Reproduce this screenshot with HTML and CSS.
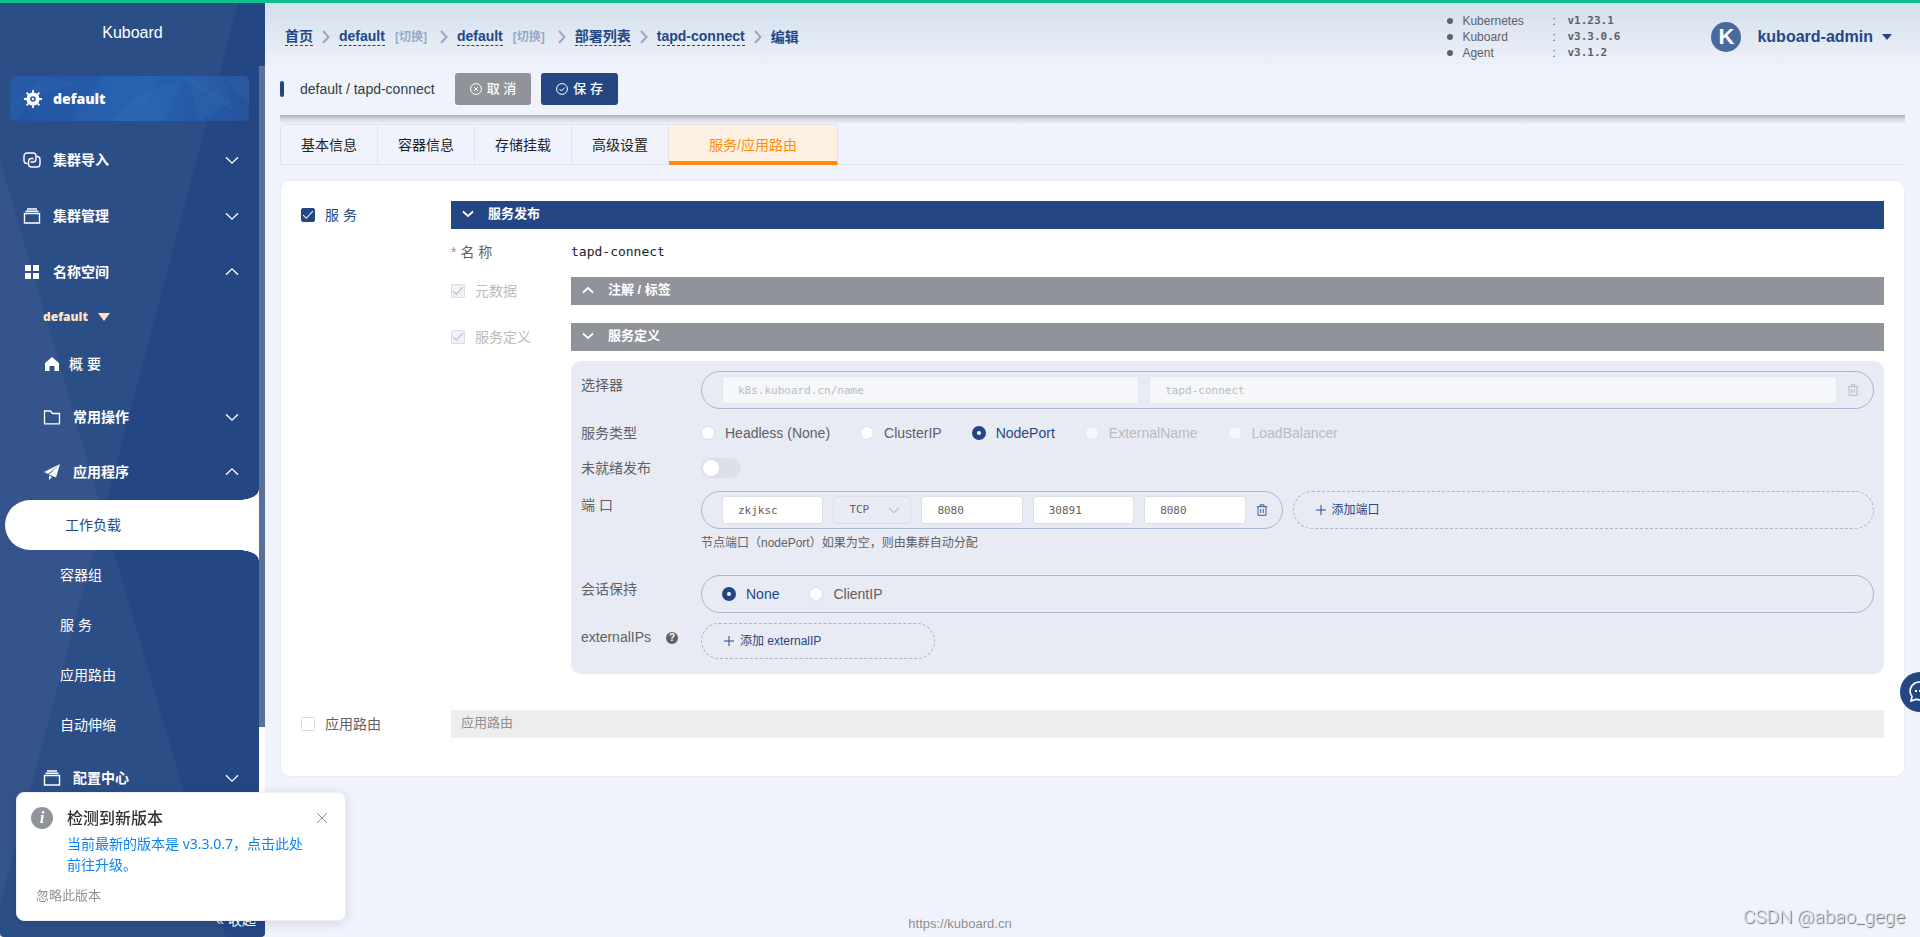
FILE: index.html
```html
<!DOCTYPE html>
<html lang="zh-CN">
<head>
<meta charset="utf-8">
<title>Kuboard</title>
<link rel="stylesheet" href="styles.css">
</head>
<body>
<svg class="defs" width="0" height="0" aria-hidden="true">
  <symbol id="i-down" viewBox="0 0 14 14"><path d="M1 4.200L7 10.200L13 4.200" fill="none" stroke="currentColor" stroke-width="1.300"/></symbol>
  <symbol id="i-up" viewBox="0 0 14 14"><path d="M1 9.800L7 3.800L13 9.800" fill="none" stroke="currentColor" stroke-width="1.300"/></symbol>
  <symbol id="i-down-bold" viewBox="0 0 12 12"><path d="M1 3.500L6 8L11 3.500" fill="none" stroke="currentColor" stroke-width="1.800"/></symbol>
  <symbol id="i-up-bold" viewBox="0 0 12 12"><path d="M1 8.500L6 4L11 8.500" fill="none" stroke="currentColor" stroke-width="1.800"/></symbol>
  <symbol id="i-box" viewBox="0 0 18 16"><path d="M1.500 5.500h15v9.500h-15z" fill="none" stroke="currentColor" stroke-width="1.400"/><path d="M2.500 3.200h13M4 1h10" fill="none" stroke="currentColor" stroke-width="1.500"/></symbol>
  <symbol id="i-trash" viewBox="0 0 12 12"><path d="M.800 2.700h10.400M4 2.500V.800h4v1.700M2 2.700v8.600h8V2.700M4.700 5v4M7.300 5v4" fill="none" stroke="currentColor" stroke-width="1"/></symbol>
  <symbol id="i-plus" viewBox="0 0 12 12"><path d="M6 1v10M1 6h10" fill="none" stroke="currentColor" stroke-width="1"/></symbol>
  <symbol id="i-sep" viewBox="0 0 8 14"><path d="M1 1l5.500 6L1 13" fill="none" stroke="currentColor" stroke-width="2"/></symbol>
</svg>
<div class="topline"></div>
<div class="app">
  <aside class="side">
    <svg class="side-art" viewBox="0 0 265 934" preserveAspectRatio="none" aria-hidden="true">
      <path d="M0 0H238L0 902Z" fill="#fff" fill-opacity=".04"/>
      <path d="M0 157L226 934H0Z" fill="#fff" fill-opacity=".04"/>
    </svg>
    <div class="brand">Kuboard</div>
    <nav class="nav">
      <button class="cluster" type="button">
        <svg class="cluster-art" viewBox="0 0 239 45" preserveAspectRatio="none" aria-hidden="true">
          <path d="M0 0H36L6 45H0ZM60 45L92 0L125 45ZM92 0H150L125 45ZM170 0H212L224 36ZM212 0H239V28Z" fill="#4f96d4" fill-opacity=".07"/>
          <path d="M36 0L66 8L0 30ZM125 22L176 0L154 45H100ZM176 0L222 26L190 45Z" fill="#4fa6d4" fill-opacity=".08"/>
        </svg>
        <svg class="ico18" viewBox="0 0 18 18" aria-hidden="true"><circle cx="9" cy="9" r="4.700" fill="none" stroke="#fff" stroke-width="3.800"/><circle cx="9" cy="9" r="1.200" fill="#fff"/><path d="M9 0v3M9 15v3M0 9h3M15 9h3M2.600 2.600l2 2M13.400 13.400l2 2M2.600 15.400l2-2M13.400 4.600l2-2" stroke="#fff" stroke-width="1.800"/></svg>
        <span>default</span>
      </button>
      <button class="item" type="button">
        <svg class="ico18" viewBox="0 0 18 16" aria-hidden="true"><g fill="none" stroke="currentColor" stroke-width="1.400"><path d="M4.500 11.500H4A3 3 0 0 1 1 8.500V4a3 3 0 0 1 3-3h6a3 3 0 0 1 3 3v3a3 3 0 0 1-3 3H7.500"/><path d="M13.500 4.500H14a3 3 0 0 1 3 3V12a3 3 0 0 1-3 3H8.500a3 3 0 0 1-3-3V9.500a3 3 0 0 1 3-3h2"/></g></svg>
        <span>集群导入</span><svg class="arrow"><use href="#i-down"/></svg>
      </button>
      <button class="item" type="button">
        <svg class="ico18"><use href="#i-box"/></svg>
        <span>集群管理</span><svg class="arrow"><use href="#i-down"/></svg>
      </button>
      <button class="item" type="button">
        <svg class="ico18" viewBox="0 0 18 18" aria-hidden="true"><path d="M2 2h6v6H2zM10 2h6v6h-6zM2 10h6v6H2zM10 10h6v6h-6z" fill="currentColor"/></svg>
        <span>名称空间</span><svg class="arrow"><use href="#i-up"/></svg>
      </button>
      <button class="ns" type="button"><span>default</span><svg class="caret" viewBox="0 0 12 8" aria-hidden="true"><path d="M0 0h12L6 8z" fill="currentColor"/></svg></button>
      <a class="home" href="#overview">
        <svg class="ico16" viewBox="0 0 16 16" aria-hidden="true"><path d="M8 1l7 6v8h-4.500v-5h-5v5H1V7z" fill="currentColor"/></svg>
        <span>概 要</span>
      </a>
      <button class="item sub" type="button">
        <svg class="ico18" viewBox="0 0 18 16" aria-hidden="true"><path d="M1.500 2h6l2 2.500h7v10.300h-15z" fill="none" stroke="currentColor" stroke-width="1.300"/></svg>
        <span>常用操作</span><svg class="arrow"><use href="#i-down"/></svg>
      </button>
      <button class="item sub" type="button">
        <svg class="ico18" viewBox="0 0 18 18" aria-hidden="true"><path d="M17 1L1 9l4 2zM17 1L6 11.500l7 3zM6 12.500l3 1.500-3 3z" fill="currentColor"/></svg>
        <span>应用程序</span><svg class="arrow"><use href="#i-up"/></svg>
      </button>
      <a class="leaf active" href="#workload">工作负载</a>
      <a class="leaf" href="#pods">容器组</a>
      <a class="leaf" href="#service">服 务</a>
      <a class="leaf" href="#ingress">应用路由</a>
      <a class="leaf" href="#hpa">自动伸缩</a>
      <button class="item sub" type="button">
        <svg class="ico18"><use href="#i-box"/></svg>
        <span>配置中心</span><svg class="arrow"><use href="#i-down"/></svg>
      </button>
    </nav>
    <div class="track"><div class="thumb"></div></div>
    <button class="fold" type="button">« 收起</button>
  </aside>

  <main class="main">
    <header class="head">
      <nav class="crumbs">
        <a href="#home">首页</a><svg class="sep"><use href="#i-sep"/></svg>
        <a href="#cluster">default</a><button class="switch-link" type="button">[切换]</button><svg class="sep far"><use href="#i-sep"/></svg>
        <a href="#namespace">default</a><button class="switch-link" type="button">[切换]</button><svg class="sep far"><use href="#i-sep"/></svg>
        <a href="#deployments">部署列表</a><svg class="sep"><use href="#i-sep"/></svg>
        <a href="#tapd-connect">tapd-connect</a><svg class="sep"><use href="#i-sep"/></svg>
        <span>编辑</span>
      </nav>
      <ul class="versions">
        <li><span class="vn">Kubernetes</span><span class="vc">:</span><span class="vv">v1.23.1</span></li>
        <li><span class="vn">Kuboard</span><span class="vc">:</span><span class="vv">v3.3.0.6</span></li>
        <li><span class="vn">Agent</span><span class="vc">:</span><span class="vv">v3.1.2</span></li>
      </ul>
      <button class="user" type="button">
        <span class="avatar">K</span><span>kuboard-admin</span>
        <svg class="user-caret" viewBox="0 0 10 6" aria-hidden="true"><path d="M0 0h10L5 6z" fill="currentColor"/></svg>
      </button>
    </header>

    <section class="actions">
      <h1>default / tapd-connect</h1>
      <button class="btn gray" type="button"><svg viewBox="0 0 12 12" aria-hidden="true"><g fill="none" stroke="currentColor"><circle cx="6" cy="6" r="5.400"/><path d="M4.200 4.200l3.600 3.600M7.800 4.200L4.200 7.800"/></g></svg>取 消</button>
      <button class="btn blue" type="button"><svg viewBox="0 0 12 12" aria-hidden="true"><g fill="none" stroke="currentColor"><circle cx="6" cy="6" r="5.400"/><path d="M3.500 6l2 2 3.200-3.500"/></g></svg>保 存</button>
    </section>
    <div class="shade"></div>

    <div class="tabs" role="tablist">
      <button role="tab" type="button">基本信息</button>
      <button role="tab" type="button">容器信息</button>
      <button role="tab" type="button">存储挂载</button>
      <button role="tab" type="button">高级设置</button>
      <button role="tab" type="button" class="on" aria-selected="true">服务/应用路由</button>
    </div>

    <form class="card">
      <div class="row-outer">
        <label class="check on"><input type="checkbox" checked><span>服 务</span></label>
        <div>
          <button class="bar bar-blue" type="button"><svg><use href="#i-down-bold"/></svg>服务发布</button>
          <div class="row-mid name-row">
            <span class="name-label"><i>*</i>名 称</span><span class="name-value">tapd-connect</span>
          </div>
          <div class="row-mid">
            <label class="check"><input type="checkbox" checked disabled><span>元数据</span></label>
            <button class="bar bar-gray" type="button"><svg><use href="#i-up-bold"/></svg>注解 / 标签</button>
          </div>
          <div class="row-mid def-row">
            <label class="check"><input type="checkbox" checked disabled><span>服务定义</span></label>
            <div>
              <button class="bar bar-gray" type="button"><svg><use href="#i-down-bold"/></svg>服务定义</button>
              <div class="panel">
                <div class="row-in">
                  <span class="lab">选择器</span>
                  <div class="pill selector">
                    <input class="field key" aria-label="选择器名称" value="k8s.kuboard.cn/name" disabled>
                    <input class="field val" aria-label="选择器值" value="tapd-connect" disabled>
                    <button class="del" type="button" aria-label="删除选择器" disabled><svg><use href="#i-trash"/></svg></button>
                  </div>
                </div>
                <div class="row-in type-row">
                  <span class="lab">服务类型</span>
                  <div class="radios">
                    <label class="radio"><input type="radio" name="type"><span>Headless (None)</span></label>
                    <label class="radio"><input type="radio" name="type"><span>ClusterIP</span></label>
                    <label class="radio"><input type="radio" name="type" checked><span>NodePort</span></label>
                    <label class="radio"><input type="radio" name="type" disabled><span>ExternalName</span></label>
                    <label class="radio"><input type="radio" name="type" disabled><span>LoadBalancer</span></label>
                  </div>
                </div>
                <div class="row-in ready-row">
                  <label class="lab" for="ready">未就绪发布</label>
                  <input class="toggle" id="ready" type="checkbox" role="switch">
                </div>
                <div class="row-in port-row">
                  <span class="lab">端 口</span>
                  <div>
                    <div class="ports">
                      <div class="pill">
                        <input class="field" aria-label="端口名称" value="zkjksc">
                        <span class="proto"><select aria-label="协议"><option>TCP</option></select><svg><use href="#i-down"/></svg></span>
                        <input class="field" aria-label="服务端口" value="8080">
                        <input class="field" aria-label="节点端口" value="30891">
                        <input class="field" aria-label="目标端口" value="8080">
                        <button class="del" type="button" aria-label="删除端口"><svg><use href="#i-trash"/></svg></button>
                      </div>
                      <button class="pill add" type="button"><svg><use href="#i-plus"/></svg>添加端口</button>
                    </div>
                    <p class="hint">节点端口（nodePort）如果为空，则由集群自动分配</p>
                  </div>
                </div>
                <div class="row-in session-row">
                  <span class="lab">会话保持</span>
                  <div class="pill radios">
                    <label class="radio"><input type="radio" name="aff" checked><span>None</span></label>
                    <label class="radio"><input type="radio" name="aff"><span>ClientIP</span></label>
                  </div>
                </div>
                <div class="row-in ext-row">
                  <span class="lab">externalIPs<span class="help">?</span></span>
                  <button class="pill add ext" type="button"><svg><use href="#i-plus"/></svg>添加 externalIP</button>
                </div>
              </div>
            </div>
          </div>
        </div>
      </div>
      <div class="row-outer ingress-row">
        <label class="check"><input type="checkbox"><span>应用路由</span></label>
        <div class="bar-off">应用路由</div>
      </div>
    </form>
    <footer class="foot"><a href="#kuboard">https://kuboard.cn</a></footer>
  </main>
</div>

<button class="chat" type="button" aria-label="反馈"><svg viewBox="0 0 22 22" aria-hidden="true"><path d="M2 20l1-4.500A9 9 0 1 1 11 19c-1.500 0-2.500-.600-4-.600S4 19.500 2 20z" fill="none" stroke="#fff" stroke-width="1.700"/><path d="M6 9h2v2H6zM10 9h2v2h-2zM14 9h2v2h-2z" fill="#fff"/></svg></button>

<div class="toast" role="alert">
  <span class="info">i</span>
  <div class="toast-body">
    <h2>检测到新版本</h2>
    <a href="#upgrade">当前最新的版本是 v3.3.0.7，点击此处前往升级。</a>
  </div>
  <button class="close" type="button" aria-label="关闭"><svg viewBox="0 0 12 12" aria-hidden="true"><path d="M1 1l10 10M11 1L1 11" stroke="currentColor" fill="none"/></svg></button>
  <button class="ignore" type="button">忽略此版本</button>
</div>
<div class="mark">CSDN @abao_gege</div>
</body>
</html>
```
FILE: styles.css
```css
:root {
  --navy: #244783;
  --text: #5f6164;
  --page: #f0f3fb;
  --line: #e1e5ee;
  --mono: "DejaVu Sans Mono", monospace;
}
* { box-sizing: border-box; }
body {
  margin: 0;
  min-height: 100vh;
  display: flex;
  flex-direction: column;
  background: var(--page);
  color: var(--text);
  font: 14px/20px "Liberation Sans", "Noto Sans CJK SC", sans-serif;
  overflow: hidden;
}
button, input, select { font: inherit; color: inherit; margin: 0; }
button { border: 0; padding: 0; background: none; text-align: left; white-space: nowrap; cursor: pointer; }
a { color: inherit; text-decoration: none; }
h1, h2, p, ul { margin: 0; padding: 0; font-weight: 400; }
svg { flex: none; }
.defs { position: absolute; }
.topline { height: 3px; background: #10bd8d; }
.app { flex: 1; display: flex; }

/* sidebar */
.side {
  position: relative;
  width: 265px;
  height: calc(100vh - 3px);
  flex: none;
  display: flex;
  flex-direction: column;
  background: var(--navy);
  color: #fff;
  border-radius: 0 0 4px 4px;
  overflow: hidden;
}
.side-art { position: absolute; inset: 0; width: 100%; height: 100%; }
.brand { position: relative; height: 63px; padding-top: 20px; text-align: center; font-size: 16px; }
.nav {
  position: relative;
  flex: 1;
  min-height: 0;
  overflow: hidden;
  margin-right: 6px;
  display: flex;
  flex-direction: column;
}
.nav > * { flex: none; }
.cluster {
  position: relative;
  display: flex;
  align-items: center;
  gap: 11px;
  height: 45px;
  margin: 10px 10px 11px;
  padding: 0 14px;
  border-radius: 5px;
  background: linear-gradient(90deg, #2454a3, #2560ad 60%, #25539c);
  font: 800 14px/20px "Open Sans", sans-serif;
  overflow: hidden;
}
.cluster-art { position: absolute; inset: 0; width: 100%; height: 100%; }
.cluster .ico18, .cluster span { position: relative; }
.ico18 { width: 18px; height: 18px; }
.ico16 { width: 16px; height: 16px; }
.item { display: flex; align-items: center; gap: 12px; height: 56px; padding: 0 20px 0 23px; font-weight: 700; }
.item.sub { padding-left: 43px; }
.arrow { width: 14px; height: 14px; margin-left: auto; }
.ns {
  display: flex;
  align-items: center;
  gap: 10px;
  height: 34px;
  padding-left: 43px;
  color: #ffe3c2;
  font: 800 12px/20px "Open Sans", sans-serif;
}
.caret { width: 12px; height: 8px; }
.home { display: flex; align-items: center; gap: 9px; height: 50px; margin-top: 5px; padding-left: 44px; font-weight: 500; }
.home + .item { height: 55px; }
.leaf { height: 50px; padding-left: 60px; line-height: 50px; }
.leaf.active {
  position: relative;
  margin-left: 5px;
  border-radius: 25px 0 0 25px;
  background: #fff;
  color: var(--navy);
}
.leaf.active::before, .leaf.active::after {
  content: "";
  position: absolute;
  right: 0;
  width: 20px;
  height: 10px;
}
.leaf.active::before { bottom: 100%; background: radial-gradient(20px 10px at 0 0, transparent 96%, #fff 100%); }
.leaf.active::after { top: 100%; background: radial-gradient(20px 10px at 0 100%, transparent 96%, #fff 100%); }
.track { position: absolute; right: 0; top: 63px; bottom: 34px; width: 6px; background: #fff; }
.thumb { height: 79%; background: #5b7099; }
.fold { position: relative; align-self: flex-end; height: 34px; padding-right: 9px; }

/* page head */
.main {
  flex: 1;
  min-width: 0;
  display: flex;
  flex-direction: column;
  padding: 0 15px;
  background: linear-gradient(#d3dfec, var(--page) 70px);
}
.head { display: flex; align-items: flex-start; height: 70px; }
.crumbs { flex: 1; display: flex; align-items: center; height: 67px; padding-left: 5px; color: var(--navy); font-weight: 700; }
.crumbs a { line-height: 18px; border-bottom: 1px dashed var(--navy); }
.crumbs .sep { width: 8px; height: 14px; margin: 0 9px; color: #96a9cb; }
.crumbs .sep.far { margin-left: 13px; }
.switch-link { margin-left: 10px; font-size: 12px; color: #96a9cb; }
.versions { width: 268px; padding-top: 10px; list-style: none; font-size: 12px; line-height: 16px; }
.versions li { display: flex; align-items: center; }
.versions li::before { content: ""; width: 6px; height: 6px; border-radius: 50%; background: var(--text); margin-right: 9px; }
.vn { width: 90px; }
.vc { width: 15px; }
.vv { font: 700 11px/16px var(--mono); }
.user { display: flex; align-items: center; height: 60px; margin: 4px 13px 0 -4px; color: var(--navy); font-size: 16px; font-weight: 700; }
.avatar {
  width: 30px;
  height: 30px;
  margin-right: 16px;
  border-radius: 50%;
  background: #4a699d;
  color: #fff;
  font-size: 22px;
  line-height: 30px;
  text-align: center;
}
.user-caret { width: 10px; height: 6px; margin-left: 9px; }
.actions { display: flex; align-items: center; gap: 10px; height: 42px; padding-bottom: 10px; color: #303d44; }
.actions h1 { display: flex; align-items: center; margin-right: 10px; font-size: 14px; }
.actions h1::before { content: ""; width: 4px; height: 16px; margin-right: 16px; border-radius: 2px; background: var(--navy); }
.btn { display: flex; align-items: center; gap: 5px; height: 32px; padding: 0 15px; border-radius: 3px; color: #fff; font-size: 13px; font-weight: 500; }
.btn svg { width: 12px; height: 12px; }
.gray { background: #909399; }
.blue { background: var(--navy); }
.shade { height: 9px; background: linear-gradient(#a9abb1, #d6d8de 45%, var(--page)); }

/* tabs */
.tabs { display: flex; height: 41px; border-bottom: 1px solid var(--line); }
.tabs button { height: 41px; padding: 0 20px; border: solid var(--line); border-width: 1px 1px 1px 0; color: #222; }
.tabs button:first-child { border-left-width: 1px; border-radius: 4px 0 0; }
.tabs .on { padding: 3px 40px 0; border-bottom: 4px solid #ff8b0d; border-radius: 0 4px 0 0; background: #fff1e2; color: #ff8b0d; }

/* card and rows */
.card { margin: 15px 0 0; padding: 20px 20px 38px; border: 1px solid #e9ecf5; border-radius: 10px; background: #fff; }
.row-outer { display: grid; grid-template-columns: 150px minmax(0, 1fr); }
.row-mid { display: grid; grid-template-columns: 120px minmax(0, 1fr); }
.row-in { display: grid; grid-template-columns: 120px minmax(0, 1fr); }
.check { display: flex; align-items: center; gap: 10px; height: 28px; }
.check.on { color: var(--navy); }
.check input {
  appearance: none;
  width: 14px;
  height: 14px;
  border: 1px solid #d8dce6;
  border-radius: 2px;
  background: #fff;
  display: grid;
  place-items: center;
}
.check input:checked { border-color: var(--navy); background: var(--navy); color: #fff; }
.check input:checked::after {
  content: "";
  width: 9px;
  height: 4px;
  margin-bottom: 3px;
  border: solid currentColor;
  border-width: 0 0 1px 1px;
  rotate: -47deg;
}
.check input:disabled { border-color: #d8dce6; background: #f0f2f9; color: #b4b7bd; }
.check input:disabled + span { color: #bbb; }
.bar { display: flex; align-items: center; gap: 14px; width: 100%; height: 28px; padding: 0 11px 2px; color: #fff; font-size: 13px; font-weight: 700; }
.bar svg { width: 12px; height: 12px; }
.bar-blue { background: var(--navy); }
.bar-gray { background: #909399; }
.name-row { margin: 13px 0 15px; }
.name-label i { margin-right: 4px; color: #f56c6c; font-style: normal; }
.name-value { font: 13px/20px var(--mono); color: #222; }
.def-row { margin-top: 18px; }
.panel { margin-top: 10px; padding: 10px 10px 15px; border-radius: 10px; background: #e8ebf3; }
.lab { display: block; line-height: 28px; }
.pill { display: flex; align-items: center; height: 38px; padding: 0 14px 0 20px; border: 1px solid #a6b5d0; border-radius: 19px; gap: 10px; }
.field {
  flex: 1;
  min-width: 0;
  width: 0;
  height: 28px;
  padding: 0 15px;
  border: 1px solid #dcdfe6;
  border-radius: 3px;
  background: #fff;
  font: 11px/20px var(--mono);
}
.field:disabled { background: #f5f7fa; border-color: #e4e7ed; color: #bbb; }
.field.key { flex: 37; }
.field.val { flex: 63; }
.del { width: 12px; height: 12px; color: #3d5c93; }
.del:disabled { color: #bbb; }
.del svg { display: block; width: 12px; height: 12px; }
.radios { display: flex; align-items: center; gap: 30px; }
.radio { display: flex; align-items: center; gap: 10px; }
.radio input { appearance: none; width: 14px; height: 14px; border: 1px solid #dcdfe6; border-radius: 50%; background: #fff; }
.radio input:checked { border: 5px solid var(--navy); }
.radio input:checked + span { color: var(--navy); }
.radio input:disabled { background: #f5f7fa; border-color: #e4e7ed; }
.radio input:disabled + span { color: #bbb; }
.type-row { margin-top: 14px; }
.type-row .lab, .ready-row .lab { line-height: 20px; }
.ready-row { margin-top: 15px; }
.toggle { appearance: none; width: 40px; height: 20px; padding: 2px; border-radius: 10px; background: #dcdfe6; }
.toggle::before { content: ""; display: block; width: 16px; height: 16px; border-radius: 50%; background: #fff; }
.port-row { margin-top: 13px; }
.ports { display: grid; grid-template-columns: minmax(0, 1fr) minmax(0, 1fr); gap: 10px; }
.proto { position: relative; flex: none; width: 78px; height: 28px; }
.proto select { appearance: none; display: block; width: 100%; height: 28px; padding: 0 15px; border: 1px solid #dcdfe6; border-radius: 3px; background: #e8ebf3; font: 11px/20px var(--mono); }
.proto svg { position: absolute; right: 11px; top: 8px; width: 12px; height: 12px; color: #b9bec9; pointer-events: none; }
.add { padding-left: 21px; gap: 5px; border-style: dashed; color: var(--navy); font-size: 12px; }
.add svg { width: 12px; height: 12px; }
.hint { margin-top: 4px; font-size: 12px; }
.session-row { margin-top: 22px; }
.ext-row { margin-top: 10px; }
.ext { width: 234px; height: 36px; }
.help { display: inline-block; width: 12px; height: 12px; margin-left: 15px; border-radius: 50%; background: #5f6164; color: #fff; font-size: 10px; font-weight: 700; line-height: 12px; text-align: center; vertical-align: 1px; }
.ingress-row { margin-top: 36px; }
.bar-off { height: 28px; padding: 0 10px; background: #ededed; color: #909090; font-size: 13px; line-height: 26px; }
.foot { margin: auto 0 3px; text-align: center; color: #8b8e94; font-size: 13px; }
.foot a { margin-right: 265px; }

/* floating parts */
.chat { position: fixed; right: -20px; top: 672px; width: 40px; height: 40px; padding: 9px; border-radius: 50%; background: var(--navy); }
.chat svg { display: block; width: 22px; height: 22px; }
.toast {
  position: fixed;
  left: 16px;
  bottom: 16px;
  width: 330px;
  display: grid;
  grid-template-columns: 36px minmax(0, 1fr) 12px;
  padding: 14px 17px 15px 14px;
  border: 1px solid #ebeef5;
  border-radius: 8px;
  background: #fff;
  box-shadow: 0 2px 12px rgba(0, 0, 0, .12);
  font-family: "Noto Sans", "Noto Sans CJK SC", sans-serif;
}
.info { width: 22px; height: 22px; border-radius: 50%; background: #909399; color: #fff; font: italic 700 17px/22px "Liberation Serif", serif; text-align: center; }
.toast h2 { font-size: 16px; line-height: 22px; font-weight: 500; color: #303133; }
.toast-body a { display: block; margin: 4px 4px 0 0; line-height: 21px; color: #0a84f5; }
.close { height: 22px; color: #909399; }
.close svg { display: block; width: 12px; height: 12px; }
.ignore { grid-column: 1 / -1; justify-self: start; margin: 10px 0 0 5px; font-size: 13px; line-height: 20px; color: #909399; }
.mark { position: fixed; right: 15px; bottom: 8px; color: #dcdee3; font: 300 19px/24px Roboto, sans-serif; text-shadow: 1px 1px 1px #666; }
```
